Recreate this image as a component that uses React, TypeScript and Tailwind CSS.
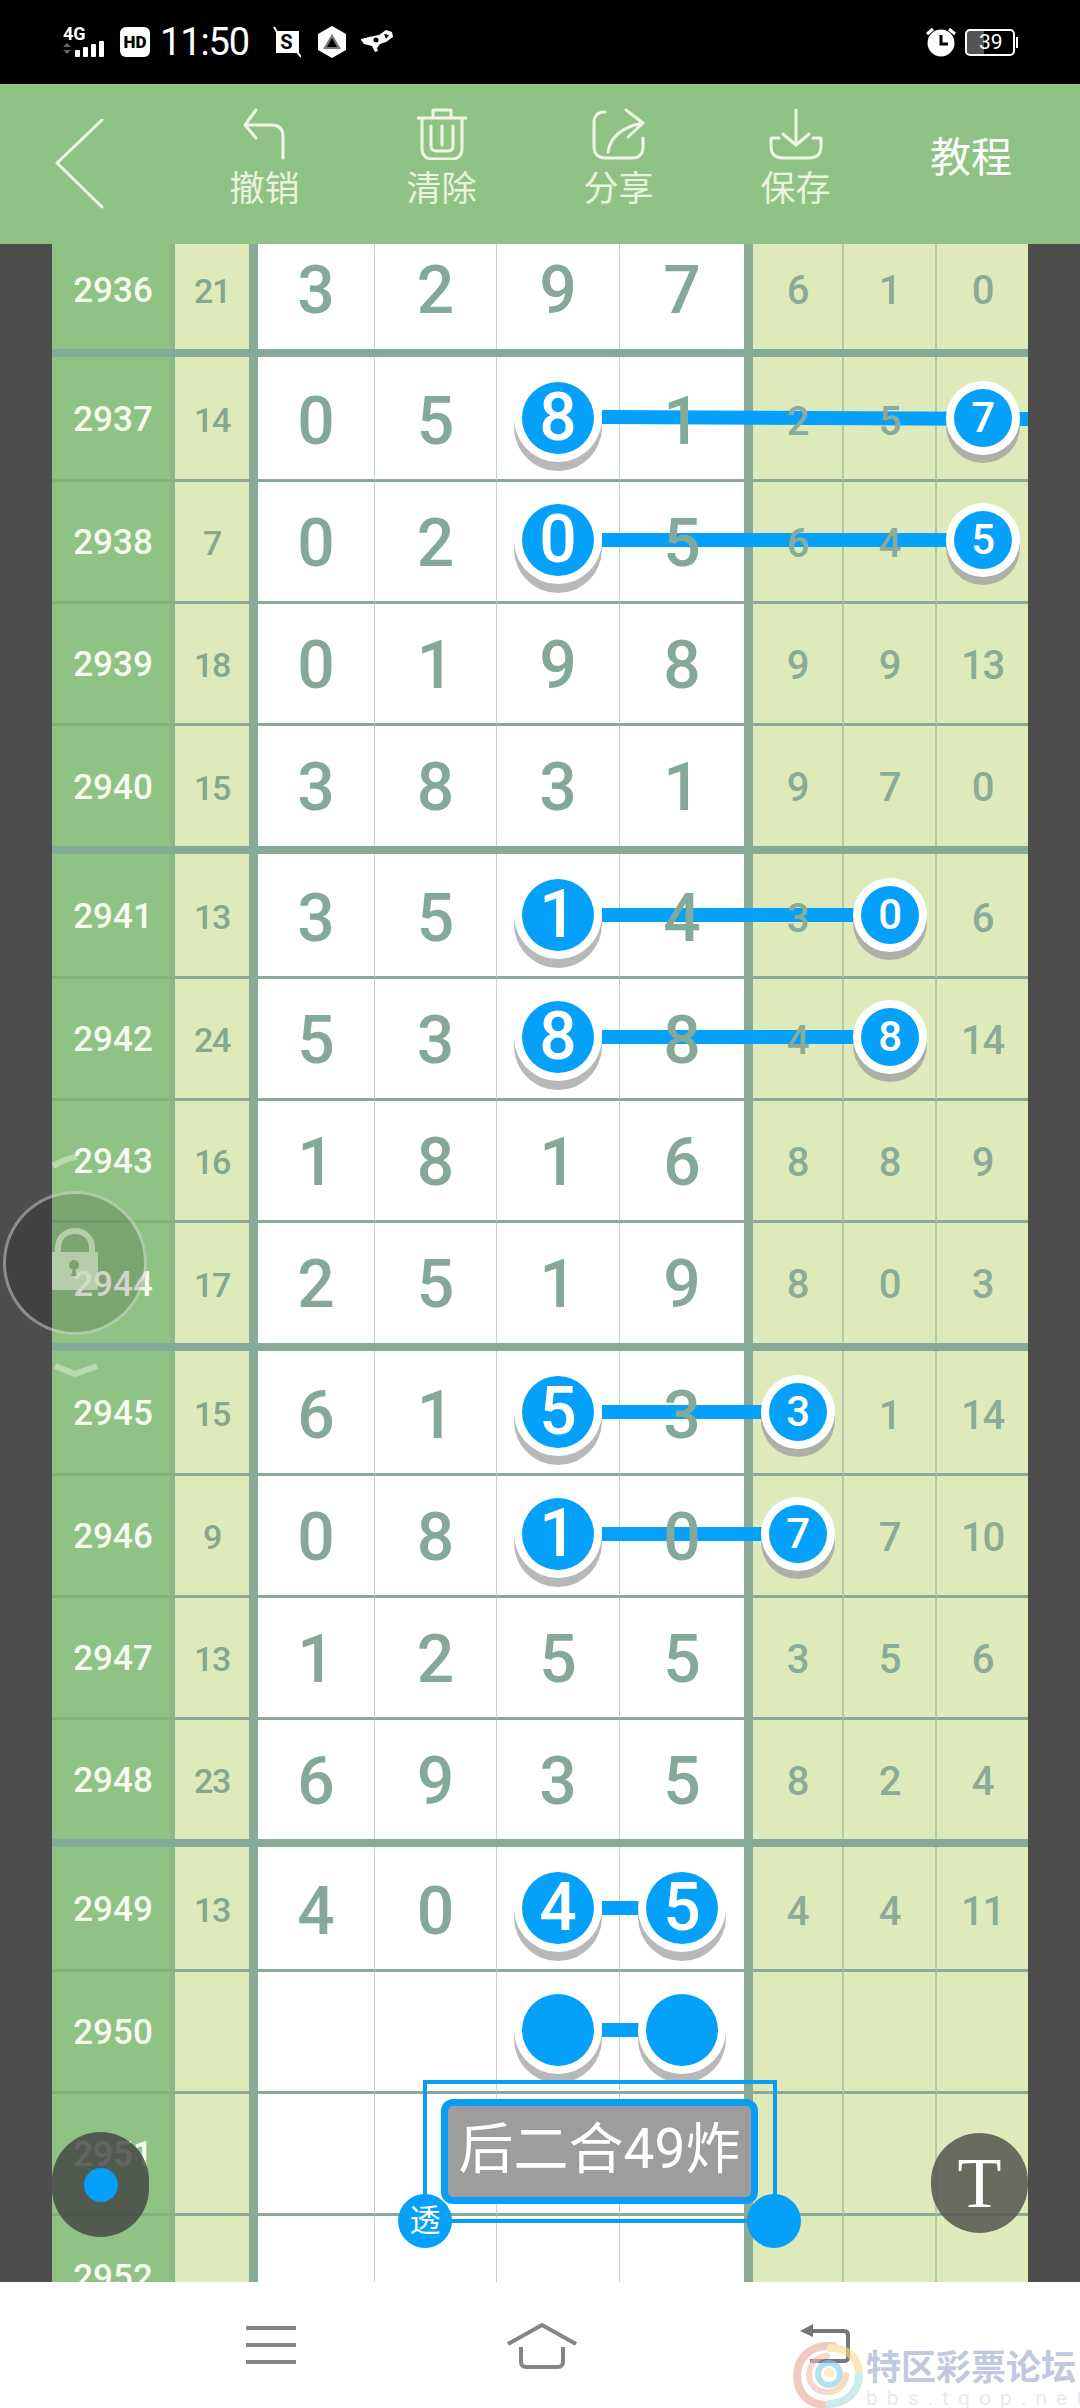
const cjk = "font-['Roboto','Noto_Sans_CJK_SC',sans-serif]";

type RowData = {
  no: string;
  sum?: string;
  digits?: string[];
  right?: string[];
  big?: number[];
  small?: number;
  lineTo?: number;
  tilt?: boolean;
};

const rows: RowData[] = [
  { no: "2936", sum: "21", digits: ["3", "2", "9", "7"], right: ["6", "1", "0"] },
  { no: "2937", sum: "14", digits: ["0", "5", "8", "1"], right: ["2", "5", "7"], big: [2], small: 2, lineTo: 976, tilt: true },
  { no: "2938", sum: "7", digits: ["0", "2", "0", "5"], right: ["6", "4", "5"], big: [2], small: 2, lineTo: 940 },
  { no: "2939", sum: "18", digits: ["0", "1", "9", "8"], right: ["9", "9", "13"] },
  { no: "2940", sum: "15", digits: ["3", "8", "3", "1"], right: ["9", "7", "0"] },
  { no: "2941", sum: "13", digits: ["3", "5", "1", "4"], right: ["3", "0", "6"], big: [2], small: 1, lineTo: 850 },
  { no: "2942", sum: "24", digits: ["5", "3", "8", "8"], right: ["4", "8", "14"], big: [2], small: 1, lineTo: 850 },
  { no: "2943", sum: "16", digits: ["1", "8", "1", "6"], right: ["8", "8", "9"] },
  { no: "2944", sum: "17", digits: ["2", "5", "1", "9"], right: ["8", "0", "3"] },
  { no: "2945", sum: "15", digits: ["6", "1", "5", "3"], right: ["3", "1", "14"], big: [2], small: 0, lineTo: 760 },
  { no: "2946", sum: "9", digits: ["0", "8", "1", "0"], right: ["7", "7", "10"], big: [2], small: 0, lineTo: 760 },
  { no: "2947", sum: "13", digits: ["1", "2", "5", "5"], right: ["3", "5", "6"] },
  { no: "2948", sum: "23", digits: ["6", "9", "3", "5"], right: ["8", "2", "4"] },
  { no: "2949", sum: "13", digits: ["4", "0", "4", "5"], right: ["4", "4", "11"], big: [2, 3], lineTo: 636 },
  { no: "2950", digits: ["", "", "", ""], big: [2, 3], lineTo: 636 },
  { no: "2951" },
  { no: "2952" },
];

function Bubble({ value, small, up }: { value: string; small?: boolean; up: boolean }) {
  const top = up ? "top-[calc(50%-2px)]" : "top-1/2";
  if (small) {
    return (
      <div className={`absolute left-1/2 z-30 h-[74px] w-[74px] -translate-x-1/2 -translate-y-1/2 rounded-full bg-white shadow-[0_8px_0_#aeb0a8] ${top}`}>
        <div className="m-2 flex h-[58px] w-[58px] items-center justify-center rounded-full bg-[#04a0fa] text-[42px] font-medium text-white">
          {value}
        </div>
      </div>
    );
  }
  return (
    <div className={`absolute left-1/2 z-30 h-[88px] w-[88px] -translate-x-1/2 -translate-y-1/2 rounded-full bg-white shadow-[0_9px_0_#b8b8b8] ${top}`}>
      <div className="m-2 flex h-[72px] w-[72px] items-center justify-center rounded-full bg-[#04a0fa] text-[66px] font-medium leading-none text-white">
        {value}
      </div>
    </div>
  );
}

function Row({ row, pos }: { row: RowData; pos: number }) {
  const digits = row.digits ?? ["", "", "", ""];
  const right = row.right ?? ["", "", ""];
  const last = pos === 3;
  const rule = last ? "" : "border-b-[3px] border-b-[#8ea898]";
  const greenRule = last ? "" : "border-b-[3px] border-b-[#84b27e]";
  const height =
    row.no === "2948" ? "h-[119px]" : pos === 0 ? "h-[125px]" : last ? "h-[120px]" : "h-[122px]";
  const nudge = pos === 0 ? "pt-2" : "pt-1";

  return (
    <div className={`relative grid grid-cols-[123px_74px_9px_117px_122px_123px_124px_9px_91px_93px_91px] ${height}`}>
      {row.lineTo && (
        <div
          className={`absolute left-[550px] z-10 h-[14px] -translate-y-1/2 bg-[#04a0fa] ${
            pos === 0 ? "top-[61px]" : "top-[58px]"
          } ${row.tilt ? "rotate-[0.3deg]" : ""}`}
          style={{ width: row.lineTo - 550 }}
        />
      )}
      <div className={`flex items-center justify-center border-r-[5px] border-r-[#87b885] bg-[#90c285] pl-1 pt-1 text-[35px] font-medium text-[#f6fbf0] ${greenRule}`}>
        {row.no}
      </div>
      <div className={`flex items-center justify-center bg-[#deeab9] pt-1 text-[34px] font-medium tracking-[-0.04em] text-[#85a68f] ${rule}`}>
        {row.sum}
      </div>
      <div className="bg-[#87ab96]" />
      {digits.map((d, i) => (
        <div
          key={i}
          className={`relative flex items-center justify-center bg-white text-[66px] font-medium leading-none text-[#84a998] ${nudge} ${rule} ${
            i < 3 ? "border-r border-r-[#c6d2cc]" : ""
          }`}
        >
          {row.big?.includes(i) ? <Bubble value={d} up={pos !== 0} /> : <span className="relative z-20">{d}</span>}
        </div>
      ))}
      <div className="bg-[#87ab96]" />
      {right.map((d, i) => (
        <div
          key={i}
          className={`relative flex items-center justify-center bg-[#deeab9] text-[40px] font-medium leading-none tracking-[-0.03em] text-[#8aab98] ${nudge} ${rule} ${
            i < 2 ? "border-r-2 border-r-[#b4c9a8]" : ""
          }`}
        >
          {row.small === i ? <Bubble value={d} small up={pos !== 0} /> : <span className="relative z-20">{d}</span>}
        </div>
      ))}
    </div>
  );
}

function SignalIcon() {
  return (
    <svg width="48" height="32" viewBox="0 0 48 32" fill="#fff">
      <text x="0" y="14" fontSize="18" fontWeight="700" fontFamily="Roboto">4G</text>
      <path d="M4 17l4 4H0zM4 28l4-4H0z" fill="#666" />
      <rect x="12" y="24" width="5" height="7" rx="1" />
      <rect x="20" y="21" width="5" height="10" rx="1" />
      <rect x="28" y="18" width="5" height="13" rx="1" />
      <rect x="36" y="15" width="5" height="16" rx="1" />
    </svg>
  );
}

function StatusBar() {
  return (
    <div className="flex h-[84px] items-center justify-between bg-black pl-[63px] pr-[62px]">
      <div className="flex items-center">
        <SignalIcon />
        <div className="ml-[9px] flex h-[30px] w-[30px] items-center justify-center rounded-[6px] bg-white text-[17px] font-black leading-none text-black">
          HD
        </div>
        <span className="ml-[10px] text-[38px] font-normal leading-none tracking-[-0.03em] text-white">11:50</span>
        <svg className="ml-[22px]" width="30" height="32" viewBox="0 0 30 32">
          <path d="M3 1l3 5h21v21l3 4" fill="none" stroke="#fff" strokeWidth="2" />
          <rect x="5" y="5" width="21" height="22" fill="#fff" />
          <text x="15.5" y="23" textAnchor="middle" fontSize="20" fontWeight="700" fontFamily="Roboto" fill="#000">S</text>
        </svg>
        <svg className="ml-[17px]" width="28" height="32" viewBox="0 0 28 32">
          <path d="M14 0l14 8v16l-14 8-14-8V8z" fill="#fff" />
          <path d="M14 8l9 15H5z" fill="#777" />
          <path d="M14 12l5 9H9z" fill="#000" />
        </svg>
        <svg className="ml-[15px]" width="32" height="24" viewBox="0 0 32 24" fill="#fff">
          <path d="M0 9l8-2 10-2 7-5 6 2 1 5-7 5-6 2-3 4 1 3-3 1-3-6-8-2-3-4z" />
          <circle cx="15" cy="10" r="2.5" fill="#000" />
          <path d="M23 4l5 1-3 4z" fill="#000" />
        </svg>
      </div>
      <div className="flex items-center">
        <svg width="32" height="30" viewBox="0 0 32 30">
          <circle cx="16" cy="16" r="13.5" fill="#fff" />
          <path d="M16 8v9h7" fill="none" stroke="#000" strokeWidth="3" />
          <path d="M2 7l6-5M30 7l-6-5" stroke="#fff" strokeWidth="3" />
        </svg>
        <div className="ml-2 flex h-[27px] w-[50px] items-center rounded-[5px] border-2 border-white bg-[linear-gradient(90deg,#555_0,#555_38%,#000_38%)] pl-[12px] text-[21px] leading-none text-white">
          39
        </div>
        <div className="ml-px h-[11px] w-[2px] bg-white" />
      </div>
    </div>
  );
}

function ToolItem({ label, children }: { label: string; children: React.ReactNode }) {
  return (
    <div className="-mt-[12px] flex w-[177px] flex-col items-center">
      {children}
      <span className="mt-[11px] text-[35px] leading-[38px] text-[#e9f3df]">{label}</span>
    </div>
  );
}

const iconStroke = {
  fill: "none",
  stroke: "#eef6e6",
  strokeWidth: 3,
  strokeLinecap: "round" as const,
  strokeLinejoin: "round" as const,
};

function Header() {
  return (
    <div className="flex h-[160px] items-center bg-[#90c285]">
      <div className="flex w-[176px] pl-[55px]">
        <svg width="50" height="90" viewBox="0 0 50 90" {...iconStroke}>
          <path d="M47 1L2 44l45 44" />
        </svg>
      </div>
      <ToolItem label="撤销">
        <svg width="44" height="52" viewBox="0 0 44 52" {...iconStroke}>
          <path d="M13 2L2 17l11 13M2 17h26c8 0 12 4 12 11v22" />
        </svg>
      </ToolItem>
      <ToolItem label="清除">
        <svg width="50" height="52" viewBox="0 0 50 52" {...iconStroke}>
          <path d="M1 10h48M16 9V2h18v7M5 11v30c0 6 4 10 10 10h20c6 0 10-4 10-10V11" />
          <path d="M14 18v20c0 3 2 5 5 5h12c3 0 5-2 5-5V18M25 18v19" />
        </svg>
      </ToolItem>
      <ToolItem label="分享">
        <svg width="54" height="52" viewBox="0 0 54 52" {...iconStroke}>
          <path d="M13 4H12C5 4 2 9 2 14v24c0 8 4 12 12 12h26c7 0 11-4 11-11V30" />
          <path d="M16 44c2-14 12-24 34-29M34 2l17 13-15 14" />
        </svg>
      </ToolItem>
      <ToolItem label="保存">
        <svg width="54" height="52" viewBox="0 0 54 52" {...iconStroke}>
          <path d="M27 2v35M14 26l13 11 13-11" />
          <path d="M10 30H2v8c0 8 4 12 12 12h26c8 0 12-4 12-12v-8h-8" />
        </svg>
      </ToolItem>
      <span className="ml-[46px] -mt-[11px] text-[41px] text-white">教程</span>
    </div>
  );
}

function LockBadge() {
  return (
    <div className="absolute left-[3px] top-[904px] z-40 h-[230px] w-[144px]">
      <svg className="absolute left-0 top-0" width="144" height="230" viewBox="0 0 144 230" fill="none">
        <path d="M50 18c8-5 16-8 24-9" stroke="#dfeccf" strokeOpacity="0.55" strokeWidth="6" />
        <path d="M52 226l20 8 22-8" stroke="#dfeccf" strokeOpacity="0.55" strokeWidth="6" transform="translate(0 -8)" />
      </svg>
      <div className="absolute left-0 top-[43px] h-[144px] w-[144px] rounded-full border-[3px] border-white/40 bg-black/15" />
      <svg className="absolute left-[49px] top-[80px] opacity-70" width="46" height="62" viewBox="0 0 46 62">
        <path d="M6 26V20C6 10 13 3 23 3s17 7 17 17v6" fill="none" stroke="#cfdfc4" strokeWidth="6" />
        <rect x="0" y="24" width="46" height="38" fill="#cfdfc4" />
        <circle cx="22" cy="37" r="5" fill="#7fa06f" />
        <path d="M22 38l3 10h-6z" fill="#7fa06f" />
      </svg>
    </div>
  );
}

function TextSticker() {
  return (
    <div className="absolute left-[423px] top-[1836px] z-40 h-[143px] w-[354px] border-[4px] border-[#0a9df5]">
      <div className="absolute left-[14px] top-[15px] flex h-[105px] w-[317px] items-center justify-center rounded-[12px] border-[7px] border-[#0a9df5] bg-[#9e9c9e] pb-1 text-[55px] leading-none text-white">
        后二合49炸
      </div>
      <div className="absolute -left-[29px] top-[110px] flex h-[54px] w-[54px] items-center justify-center rounded-full bg-[#04a0fa] text-[31px] text-white">
        透
      </div>
      <div className="absolute left-[320px] top-[110px] h-[54px] w-[54px] rounded-full bg-[#04a0fa]" />
    </div>
  );
}

function NavBar() {
  return (
    <div className="relative flex h-[126px] items-start bg-white pl-[246px] pt-[44px]">
      <div className="flex w-[50px] flex-col gap-[13px]">
        <div className="h-1 bg-[#858585]" />
        <div className="h-1 bg-[#858585]" />
        <div className="h-1 bg-[#858585]" />
      </div>
      <svg className="ml-[210px] -mt-[3px]" width="72" height="46" viewBox="0 0 72 46" fill="none" stroke="#858585" strokeWidth="4" strokeLinejoin="round">
        <path d="M2 21L36 2l34 19" />
        <path d="M15 24v15c0 3 2 5 5 5h32c3 0 5-2 5-5V24" />
      </svg>
      <svg className="ml-[222px] -mt-[3px]" width="52" height="44" viewBox="0 0 52 44" fill="none" stroke="#777" strokeWidth="4">
        <path d="M4 8h40c3 0 4 2 4 4v22c0 3-1 4-4 4H10" />
        <path d="M0 8l13-7v13z" fill="#777" stroke="none" />
      </svg>
      <div className="absolute left-[793px] top-[60px] flex items-start">
        <svg width="70" height="66" viewBox="0 0 70 66" fill="none" strokeLinecap="round" opacity="0.6">
          <path d="M40 4C18 2 4 16 4 34c0 18 12 28 28 29" stroke="#e6a898" strokeWidth="8" />
          <path d="M38 6c16 0 28 10 28 26" stroke="#f7d98e" strokeWidth="8" />
          <path d="M66 34c0 14-12 28-30 28" stroke="#a9dfe2" strokeWidth="8" />
          <path d="M34 14c-11 0-18 9-18 19 0 10 8 17 18 17" stroke="#f3bcb4" strokeWidth="6" />
          <path d="M38 50c9-2 15-9 15-17" stroke="#f5c68f" strokeWidth="6" />
          <circle cx="36" cy="32" r="11" fill="none" stroke="#7fd0e4" strokeWidth="6" />
          <circle cx="36" cy="31" r="5" fill="#f7e3a4" />
        </svg>
        <div className="ml-[3px] mt-[9px] flex flex-col">
          <span className="whitespace-nowrap text-[35px] font-bold leading-[35px] text-[#c1c9e0]">特区彩票论坛</span>
          <span className="mt-[2px] whitespace-nowrap text-[21px] leading-[20px] tracking-[0.43em] text-[#e4e9f2]">bbs.tqop.net</span>
        </div>
      </div>
    </div>
  );
}

export default function App() {
  const groups: RowData[][] = [];
  for (let i = 1; i < rows.length; i += 4) groups.push(rows.slice(i, i + 4));

  return (
    <div className={`flex h-[2408px] w-[1080px] flex-col overflow-hidden ${cjk}`}>
      <StatusBar />
      <Header />
      <div className="relative h-[2038px] overflow-hidden bg-[#4d4d4d] px-[52px]">
        <div className="-mt-[15px]">
          <Row row={rows[0]} pos={3} />
          {groups.map((group, g) => (
            <div key={g}>
              <div className="h-2 bg-[#85ab98]" />
              {group.map((row, i) => (
                <Row key={row.no} row={row} pos={i} />
              ))}
            </div>
          ))}
        </div>
        <LockBadge />
        <TextSticker />
        <div className="absolute left-[52px] top-[1888px] z-40 flex h-[105px] w-[97px] items-center justify-center rounded-full bg-[#404040]/80">
          <div className="h-[34px] w-[34px] rounded-full bg-[#04a0fa]" />
        </div>
        <div className="absolute left-[931px] top-[1889px] z-40 flex h-[100px] w-[97px] items-center justify-center rounded-full bg-[#55554d]/85 font-['Liberation_Serif',serif] text-[72px] leading-none text-white">
          T
        </div>
      </div>
      <NavBar />
    </div>
  );
}
